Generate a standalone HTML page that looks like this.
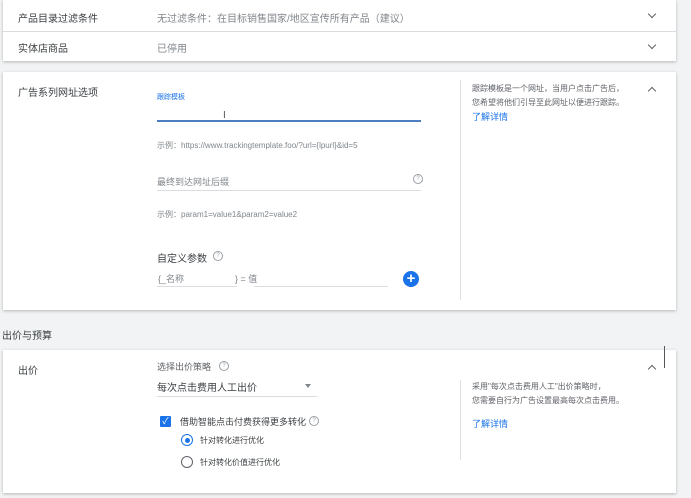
<!DOCTYPE html>
<html><head><meta charset="utf-8"><style>
body{margin:0;width:691px;height:498px;background:#f1f3f4;font-family:"Liberation Sans","Noto Sans CJK SC",sans-serif;position:relative;overflow:hidden;color:#3c4043}
.card{position:absolute;left:3px;width:673px;background:#fff;box-shadow:0 1px 3px rgba(0,0,0,.25)}
.a{position:absolute;white-space:nowrap}
.lbl{font-size:10px;color:#3c4043}
.g{color:#80868b}
.s{font-size:8px;color:#80868b}
.chev{position:absolute;width:5px;height:5px;border-right:1.3px solid #5f6368;border-bottom:1.3px solid #5f6368}
.dn{transform:rotate(45deg)}
.up{transform:rotate(-135deg)}
.line{position:absolute;height:1px;background:#dadce0}
.q{position:absolute;width:8px;height:8px;border:1px solid #9aa0a6;border-radius:50%;font-size:6px;line-height:8px;text-align:center;color:#9aa0a6}
.link{color:#1a73e8;font-size:9px}
</style></head><body>
<div class="card" style="top:0;height:61px">
 <div class="a lbl" style="left:15px;top:10px">产品目录过滤条件</div>
 <div class="a g" style="left:154px;top:10px;font-size:10px">无过滤条件：在目标销售国家/地区宣传所有产品（建议）</div>
 <div class="chev dn" style="left:646px;top:11px"></div>
 <div class="line" style="left:0;right:0;top:31px"></div>
 <div class="a lbl" style="left:15px;top:40px">实体店商品</div>
 <div class="a g" style="left:154px;top:40px;font-size:10px">已停用</div>
 <div class="chev dn" style="left:646px;top:42px"></div>
</div>
<div class="card" style="top:72px;height:238px">
 <div class="a lbl" style="left:15px;top:12px">广告系列网址选项</div>
 <div class="a" style="left:154px;top:20px;font-size:7px;color:#1a73e8">跟踪模板</div>
 <div class="a" style="left:220px;top:38px;font-size:10px;color:#555">I</div>
 <div style="position:absolute;left:154px;top:48px;width:264px;height:2px;background:#4a7fc1"></div>
 <div class="a s" style="left:154px;top:68px">示例：https://www.trackingtemplate.foo/?url={lpurl}&amp;id=5</div>
 <div class="a g" style="left:154px;top:103px;font-size:9px">最终到达网址后缀</div>
 <div class="q" style="left:410px;top:102px">?</div>
 <div class="line" style="left:154px;width:264px;top:118px"></div>
 <div class="a s" style="left:154px;top:137px">示例：param1=value1&amp;param2=value2</div>
 <div class="a" style="left:154px;top:178px;font-size:10px">自定义参数</div>
 <div class="q" style="left:210px;top:179px">?</div>
 <div class="a g" style="left:155px;top:200px;font-size:9px">{_名称</div>
 <div class="a g" style="left:232px;top:200px;font-size:9px">} = 值</div>
 <div class="line" style="left:154px;width:80px;top:214px"></div>
 <div class="line" style="left:251px;width:134px;top:214px"></div>
 <div style="position:absolute;left:400px;top:199px;width:16px;height:16px;border-radius:50%;background:#1a73e8;color:#fff;font-size:15px;line-height:16px;text-align:center;font-weight:bold">+</div>
 <div style="position:absolute;left:457px;top:8px;width:1px;height:220px;background:#e0e0e0"></div>
 <div class="a" style="left:469px;top:10px;font-size:8px;color:#5f6368;line-height:14px">跟踪模板是一个网址，当用户点击广告后，<br>您希望将他们引导至此网址以便进行跟踪。<br><span class="link">了解详情</span></div>
 <div class="chev up" style="left:646px;top:16px"></div>
</div>
<div class="a" style="left:2px;top:327px;font-size:10px">出价与预算</div>
<div class="card" style="top:350px;height:143px">
 <div class="a lbl" style="left:15px;top:12px">出价</div>
 <div class="a" style="left:154px;top:10px;font-size:9px;color:#5f6368">选择出价策略</div>
 <div class="q" style="left:216px;top:11px">?</div>
 <div class="a" style="left:154px;top:29px;font-size:10px">每次点击费用人工出价</div>
 <div style="position:absolute;left:302px;top:34px;border:3px solid transparent;border-top:4px solid #80868b"></div>
 <div class="line" style="left:154px;width:160px;top:46px"></div>
 <div style="position:absolute;left:157px;top:66px;width:11px;height:11px;background:#1a73e8;border-radius:1px;color:#fff;font-size:9px;line-height:11px;text-align:center">✓</div>
 <div class="a" style="left:177px;top:65px;font-size:9px">借助智能点击付费获得更多转化</div>
 <div class="q" style="left:306px;top:66px">?</div>
 <div style="position:absolute;left:178px;top:84px;width:10px;height:10px;border:1.5px solid #1a73e8;border-radius:50%"><div style="margin:2.5px;width:5px;height:5px;border-radius:50%;background:#1a73e8"></div></div>
 <div class="a" style="left:197px;top:85px;font-size:8px">针对转化进行优化</div>
 <div style="position:absolute;left:178px;top:106px;width:10px;height:10px;border:1.5px solid #5f6368;border-radius:50%"></div>
 <div class="a" style="left:197px;top:107px;font-size:8px">针对转化价值进行优化</div>
 <div style="position:absolute;left:457px;top:30px;width:1px;height:80px;background:#e0e0e0"></div>
 <div class="a" style="left:469px;top:30px;font-size:8px;color:#5f6368;line-height:14px">采用"每次点击费用人工"出价策略时，<br>您需要自行为广告设置最高每次点击费用。</div>
 <div class="a link" style="left:469px;top:67px">了解详情</div>
 <div class="chev up" style="left:646px;top:16px"></div>
 <div style="position:absolute;left:661px;top:-4px;width:1px;height:22px;background:#555"></div>
</div>
</body></html>
